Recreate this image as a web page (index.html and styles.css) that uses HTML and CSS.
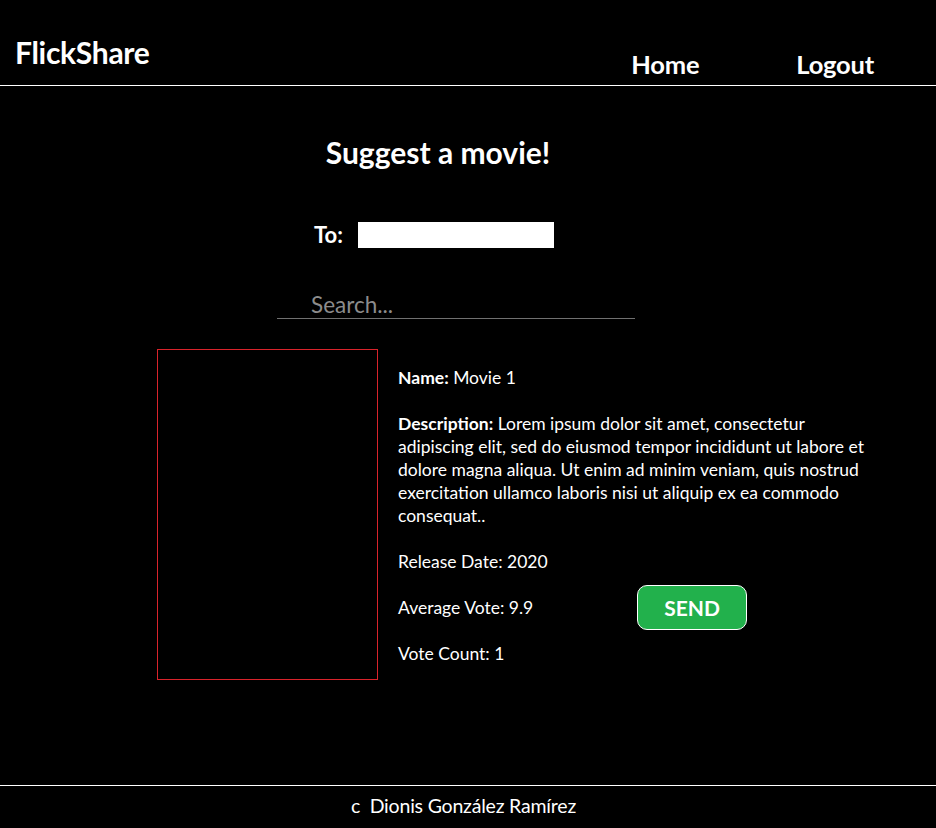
FILE: index.html
```html
<!DOCTYPE html>
<html lang="en">
<head>
<meta charset="utf-8">
<title>FlickShare</title>
<link rel="stylesheet" href="styles.css">
</head>
<body>
<header class="topbar">
  <div class="logo">FlickShare</div>
  <nav class="nav">
    <a class="nav-link" href="#">Home</a>
    <a class="nav-link" href="#">Logout</a>
  </nav>
</header>
<main class="main">
  <h1 class="title">Suggest a movie!</h1>
  <div class="to-row">
    <label class="to-label" for="to">To:</label>
    <input class="to-input" id="to" type="text">
  </div>
  <div class="search">
    <input class="search-input" type="text" placeholder="Search...">
  </div>
  <section class="movie">
    <div class="poster"></div>
    <div class="details">
      <p class="line"><b>Name:</b> Movie 1</p>
      <p class="line"><b>Description:</b> Lorem ipsum dolor sit amet, consectetur adipiscing elit, sed do eiusmod tempor incididunt ut labore et dolore magna aliqua. Ut enim ad minim veniam, quis nostrud exercitation ullamco laboris nisi ut aliquip ex ea commodo consequat..</p>
      <p class="line">Release Date: 2020</p>
      <div class="line vote-row">
        <span class="vote-text">Average Vote: 9.9</span>
        <button class="send" type="button">SEND</button>
      </div>
      <p class="line">Vote Count: 1</p>
    </div>
  </section>
</main>
<footer class="footer">c&nbsp; Dionis González Ramírez</footer>
</body>
</html>
```
FILE: styles.css
```css
* { box-sizing: border-box; }
html, body { margin: 0; padding: 0; }
body {
  background: #000;
  color: #fff;
  font-family: Lato, "Open Sans", sans-serif;
  min-height: 828px;
  display: flex;
  flex-direction: column;
}
.topbar {
  display: flex;
  justify-content: space-between;
  height: 86px;
  border-bottom: 1px solid #fff;
}
.logo {
  font-weight: 700;
  font-size: 30px;
  padding: 34px 0 0 15px;
  letter-spacing: -0.3px;
}
.nav {
  display: flex;
  gap: 97px;
  padding: 49px 62px 0 0;
}
.nav-link {
  color: #fff;
  text-decoration: none;
  font-weight: 700;
  font-size: 25.5px;
  letter-spacing: -0.2px;
}
.main {
  flex: 1;
}
.title {
  width: 876px;
  margin: 49px 0 0;
  text-align: center;
  font-size: 30px;
  font-weight: 700;
  line-height: 34px;
}
.to-row {
  width: 868px;
  display: flex;
  justify-content: center;
  align-items: center;
  gap: 15px;
  margin-top: 52px;
}
.to-label {
  font-weight: 700;
  font-size: 22px;
}
.to-input {
  width: 196px;
  height: 26px;
  border: none;
  background: #fff;
  padding: 0;
  margin: 0;
}
.search {
  margin: 42px 0 0 277px;
  width: 358px;
  border-bottom: 1px solid #707070;
}
.search-input {
  display: block;
  width: 100%;
  background: transparent;
  border: none;
  outline: none;
  color: #fff;
  font-family: Lato, "Open Sans", sans-serif;
  font-size: 22.5px;
  padding: 0 0 0 34px;
  height: 28px;
}
.search-input::placeholder { color: #8c8c8c; }
.movie {
  display: flex;
  gap: 20px;
  margin: 30px 0 0 157px;
}
.poster {
  width: 221px;
  height: 331px;
  border: 1px solid #d9232b;
  flex: none;
}
.details {
  width: 480px;
  padding-top: 17px;
  font-size: 17.5px;
}
.line {
  margin: 0 0 23px;
  line-height: 23px;
}
.vote-row {
  display: flex;
  align-items: center;
}
.vote-text { width: 239px; flex: none; }
.send {
  width: 110px;
  height: 45px;
  margin: -11px 0;
  background: #22b14c;
  color: #fff;
  border: 1px solid #fff;
  border-radius: 10px;
  font-family: Lato, "Open Sans", sans-serif;
  font-weight: 700;
  font-size: 21px;
  padding: 0;
}
.footer {
  height: 43px;
  border-top: 1px solid #fff;
  text-align: center;
  font-size: 19.5px;
  line-height: 40px;
  letter-spacing: -0.2px;
  padding-right: 9px;
}
```
